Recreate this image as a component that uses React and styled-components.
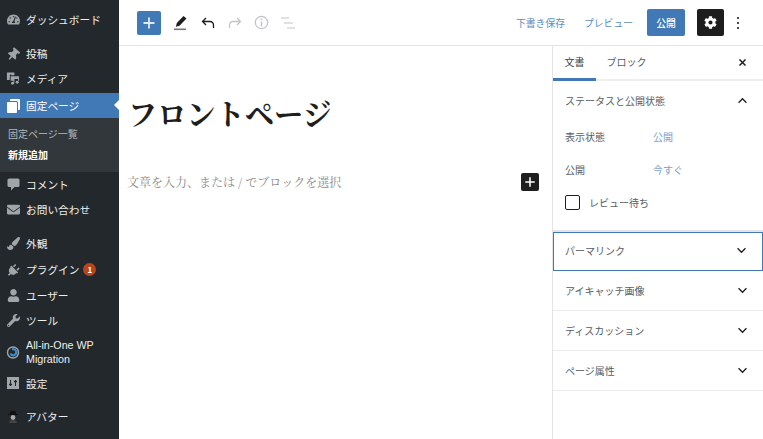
import React from "react";
import styled, { createGlobalStyle } from "styled-components";
import { FaThumbtack, FaEnvelope, FaPaintBrush, FaPlug, FaUser, FaWrench, FaCog, FaTachometerAlt } from "react-icons/fa";

const Global = createGlobalStyle`
  html, body { margin: 0; padding: 0; height: 100%; overflow: hidden; background: #fff; }
  * { box-sizing: border-box; }
  body { font-family: "Noto Sans CJK JP", "Liberation Sans", sans-serif; }
`;

const Page = styled.div`
  display: flex;
  width: 763px;
  height: 439px;
  overflow: hidden;
`;
const Side = styled.nav`
  width: 119px;
  flex: none;
  background: #23282d;
  color: #eee;
  font-size: 10.7px;
  padding-top: 7px;
  overflow: hidden;
`;
const Item = styled.div`
  position: relative;
  display: flex;
  align-items: center;
  height: ${p => p.$h || 25}px;
  margin-bottom: ${p => p.$mb || 0}px;
  padding-left: 6px;
  background: ${p => (p.$active ? "#4079b6" : "transparent")};
  color: ${p => (p.$active ? "#fff" : "#eee")};
  line-height: 13px;
  ${p => p.$active && `
    &::after {
      content: "";
      position: absolute;
      right: 0;
      top: 7px;
      border: 5.5px solid transparent;
      border-right-color: #fff;
      border-left-width: 0;
    }
  `}
`;
const LatinLabel = styled.span`
  font-family: "Liberation Sans", sans-serif;
  margin-top: -1px;
`;
const IconSlot = styled.span`
  width: 14px;
  height: 14px;
  margin-right: 6px;
  display: flex;
  align-items: center;
  justify-content: center;
  flex: none;
  color: ${p => (p.$active ? "#fff" : "#a0a5aa")};
  font-size: 13px;
  transform: rotate(${p => p.$rot || 0}deg);
`;
const Badge = styled.span`
  display: inline-flex;
  align-items: center;
  justify-content: center;
  width: 13px;
  height: 13px;
  border-radius: 50%;
  background: #b5461f;
  color: #fff;
  font-size: 8px;
  font-weight: 700;
  margin-left: 4px;
`;
const Sub = styled.div`
  background: #32373c;
  height: 54px;
  padding: 8px 0 0 8px;
  font-size: 10px;
`;
const SubItem = styled.div`
  height: 21px;
  line-height: 16px;
  color: ${p => (p.$strong ? "#fff" : "#b4b9be")};
  font-weight: ${p => (p.$strong ? 700 : 400)};
`;
const Main = styled.div`
  flex: 1;
  display: flex;
  flex-direction: column;
  min-width: 0;
`;
const Top = styled.header`
  height: 46px;
  flex: none;
  display: flex;
  align-items: center;
  padding: 0 23px 0 18px;
  border-bottom: 1px solid #e2e4e7;
`;
const Tool = styled.span`
  display: flex;
  width: 21px;
  justify-content: center;
  margin-right: 6px;
  color: ${p => (p.$off ? "#c3c4c7" : "#1e1e1e")};
`;
const AddBtn = styled.button`
  width: 24px;
  height: 24px;
  border: 0;
  border-radius: 2px;
  background: #4079b6;
  color: #dfe9f3;
  padding: 0;
  margin-right: 9px;
  display: flex;
  align-items: center;
  justify-content: center;
`;
const Spacer = styled.div`
  flex: 1;
`;
const LinkBtn = styled.span`
  color: #4079b6;
  opacity: .85;
  font-size: 9.8px;
  margin-right: ${p => p.$mr}px;
`;
const Publish = styled.button`
  width: 38px;
  height: 27px;
  border: 0;
  border-radius: 2px;
  background: #4079b6;
  color: #fff;
  font: 500 9.8px "Noto Sans CJK JP", sans-serif;
  padding: 0;
  margin-right: 12px;
`;
const GearBtn = styled.button`
  width: 27px;
  height: 27px;
  border: 0;
  border-radius: 2px;
  background: #1e1e1e;
  color: #fff;
  padding: 0;
  display: flex;
  align-items: center;
  justify-content: center;
  margin-right: 12px;
`;
const Body = styled.div`
  flex: 1;
  display: flex;
  min-height: 0;
`;
const Editor = styled.main`
  flex: 1;
  padding: 44px 13px 0 11px;
  min-width: 0;
`;
const Title = styled.h1`
  margin: 0 0 0 -2px;
  font: 700 29.2px/44px "Noto Serif CJK JP", "Liberation Serif", "Noto Sans CJK JP", serif;
  color: #1e1e1e;
  white-space: nowrap;
`;
const PlaceRow = styled.div`
  display: flex;
  align-items: center;
  justify-content: space-between;
  margin-top: 39px;
  margin-left: -3px;
  color: #8a8a8a;
  font: 12px/18px "Noto Serif CJK JP", "Liberation Serif", "Noto Sans CJK JP", serif;
`;
const InlineAdd = styled.span`
  width: 18px;
  height: 18px;
  border-radius: 2px;
  background: #1e1e1e;
  color: #fff;
  display: flex;
  align-items: center;
  justify-content: center;
`;
const Panel = styled.aside`
  width: 211px;
  flex: none;
  border-left: 1px solid #e2e4e7;
  font-size: 10px;
  color: #555d66;
`;
const Tabs = styled.div`
  height: 35px;
  display: flex;
  align-items: stretch;
  border-bottom: 2px solid #eeeeee;
  padding-right: 16px;
`;
const TabItem = styled.div`
  width: ${p => p.$w}px;
  display: flex;
  align-items: center;
  justify-content: center;
  padding-bottom: 2px;
  color: ${p => (p.$active ? "#3c434a" : "#555d66")};
  border-bottom: 3px solid ${p => (p.$active ? "#4079b6" : "transparent")};
  margin-bottom: -2px;
`;
const Section = styled.section`
  height: ${p => p.$h || 40}px;
  display: flex;
  align-items: center;
  justify-content: space-between;
  padding: 0 4px ${p => (p.$focus ? 2 : 0)}px ${p => (p.$focus ? 11 : 12)}px;
  border-bottom: 1px solid ${p => (p.$open ? "transparent" : "#e8eaeb")};
  ${p => p.$focus && `border: 1px solid #4079b6;`}
`;
const Status = styled.div`
  height: 112px;
  border-bottom: 2px solid #e2e4e7;
  padding: 0 12px;
`;
const Row = styled.div`
  display: flex;
  height: 33px;
  align-items: center;
`;
const Label = styled.span`
  width: 88px;
`;
const Val = styled.span`
  color: #4079b6;
  opacity: .7;
`;
const Check = styled.span`
  width: 15px;
  height: 15px;
  border: 1px solid #1e1e1e;
  border-radius: 2px;
  margin-right: 9px;
`;
const Close = styled.span`
  margin-left: auto;
  display: flex;
  align-items: center;
  color: #1e1e1e;
`;
const Chevron = styled.span`
  width: 24px;
  display: flex;
  justify-content: center;
  margin-right: 5px;
  color: #1e1e1e;
`;

const Plus = ({ s = 14, w = 2 }) => (
  <svg width={s} height={s} viewBox="0 0 14 14"><path d="M7 1.5v11M1.5 7h11" stroke="currentColor" strokeWidth={w} fill="none" /></svg>
);
const Chev = ({ up }) => (
  <svg width="11" height="7" viewBox="0 0 12 8"><path d={up ? "M1.5 6.5L6 2l4.5 4.5" : "M1.5 1.5L6 6l4.5-4.5"} stroke="currentColor" strokeWidth="1.5" fill="none" /></svg>
);
const Media = () => (
  <svg width="15" height="15" viewBox="0 0 15 15" fill="currentColor"><path d="M1 1h8v3H6.5A2.5 2.5 0 0 0 4 6.5V9H1z" /><circle cx="5" cy="4.2" r="1" fill="#23282d" /><path d="M5 5h9v5h-1V8H9v4H8V10H5z" /><circle cx="7" cy="12.5" r="1.6" /><circle cx="12" cy="11.5" r="1.6" /></svg>
);
const Pages = () => (
  <svg width="13" height="14" viewBox="0 0 13 14" fill="currentColor"><path d="M4 0h8a1 1 0 0 1 1 1v9a1 1 0 0 1-1 1h-1V3.5A1.5 1.5 0 0 0 9.5 2H3V1a1 1 0 0 1 1-1z" /><path d="M1 3h8a1 1 0 0 1 1 1v9a1 1 0 0 1-1 1H1a1 1 0 0 1-1-1V4a1 1 0 0 1 1-1z" /></svg>
);
const Bubble = () => (
  <svg width="13" height="13" viewBox="0 0 13 13" fill="currentColor"><path d="M2 .5h9a1.5 1.5 0 0 1 1.5 1.5v5.5A1.5 1.5 0 0 1 11 9H7.5L4 12.5V9H2A1.5 1.5 0 0 1 .5 7.5V2A1.5 1.5 0 0 1 2 .5z" /></svg>
);
const Migrate = () => (
  <svg width="14" height="14" viewBox="0 0 14 14" fill="none"><circle cx="7" cy="7.5" r="5.5" stroke="#a0a5aa" strokeWidth="1.4" /><path d="M4.5 8.5A3 3 0 1 0 6 4.5" stroke="#3f8fc9" strokeWidth="2" /></svg>
);
const Settings = () => (
  <svg width="12" height="12" viewBox="0 0 12 12"><rect width="12" height="12" fill="currentColor" /><path d="M3.5 3v6M8.5 3v6" stroke="#23282d" strokeWidth="1" /><path d="M2 7.5h3M7 4.5h3" stroke="#23282d" strokeWidth="1.6" /></svg>
);
const Avatar = () => (
  <svg width="12" height="14" viewBox="0 0 12 14"><path d="M3.5 1h5l.6 3H11v1H1V4h1.9z" fill="#111" /><circle cx="6" cy="7.5" r="2.4" fill="#aaa" /><path d="M2 13a4 3 0 0 1 8 0z" fill="#444" /></svg>
);

const nav = [
  { t: "ダッシュボード", i: <FaTachometerAlt />, h: 24, mb: 10 },
  { t: "投稿", i: <FaThumbtack />, rot: 40 },
  { t: "メディア", i: <Media />, mb: 2 },
];
const nav2 = [
  { t: "コメント", i: <Bubble /> },
  { t: "お問い合わせ", i: <FaEnvelope />, mb: 9 },
  { t: "外観", i: <FaPaintBrush />, h: 25.5 },
  { t: "プラグイン", i: <FaPlug />, badge: 1, rot: 45, h: 26 },
  { t: "ユーザー", i: <FaUser />, h: 25.5 },
  { t: "ツール", i: <FaWrench />, h: 25 },
  { t: <LatinLabel>All-in-One WP<br />Migration</LatinLabel>, i: <Migrate />, h: 37 },
];

function NavRow({ n }) {
  return (
    <Item $h={n.h} $mb={n.mb}>
      <IconSlot $rot={n.rot}>{n.i}</IconSlot>
      <span>{n.t}</span>
      {n.badge && <Badge>{n.badge}</Badge>}
    </Item>
  );
}

export default function App() {
  return (
    <Page>
      <Global />
      <Side>
        {nav.map((n, k) => <NavRow key={k} n={n} />)}
        <Item $h={25} $active>
          <IconSlot $active><Pages /></IconSlot>
          <span>固定ページ</span>
        </Item>
        <Sub>
          <SubItem>固定ページ一覧</SubItem>
          <SubItem $strong>新規追加</SubItem>
        </Sub>
        {nav2.map((n, k) => <NavRow key={k} n={n} />)}
        <Item $h={26} $mb={8}>
          <IconSlot><Settings /></IconSlot>
          <span>設定</span>
        </Item>
        <Item $h={25}>
          <IconSlot><Avatar /></IconSlot>
          <span>アバター</span>
        </Item>
      </Side>
      <Main>
        <Top>
          <AddBtn aria-label="追加"><Plus s={14} w={1.8} /></AddBtn>
          <Tool>
            <svg width="15" height="16" viewBox="0 0 15 16"><path d="M10.5 1l3 2.5-7 7.2-3.6 1 .9-3.6z" fill="currentColor" /><rect x="1" y="13.5" width="12" height="1.6" fill="#777" /></svg>
          </Tool>
          <Tool>
            <svg width="14" height="12" viewBox="0 0 14 12"><path d="M5 1L1.5 4.5 5 8M1.5 4.5H9a3.5 3.5 0 0 1 3.5 3.5v3" stroke="currentColor" strokeWidth="1.3" fill="none" /></svg>
          </Tool>
          <Tool $off>
            <svg width="14" height="12" viewBox="0 0 14 12"><path d="M9 1l3.5 3.5L9 8M12.5 4.5H5A3.5 3.5 0 0 0 1.5 8v3" stroke="currentColor" strokeWidth="1.3" fill="none" /></svg>
          </Tool>
          <Tool $off>
            <svg width="15" height="15" viewBox="0 0 15 15"><circle cx="7.5" cy="7.5" r="6.2" stroke="currentColor" strokeWidth="1.3" fill="none" /><path d="M7.5 6.5v5M7.5 3.6v1.6" stroke="currentColor" strokeWidth="1.5" /></svg>
          </Tool>
          <Tool $off>
            <svg width="15" height="12" viewBox="0 0 15 12"><path d="M0 1h8M3 6h9M6 11h8" stroke="currentColor" strokeWidth="1.2" /></svg>
          </Tool>
          <Spacer />
          <LinkBtn $mr={19}>下書き保存</LinkBtn>
          <LinkBtn $mr={14}>プレビュー</LinkBtn>
          <Publish>公開</Publish>
          <GearBtn aria-label="設定"><FaCog size={13} /></GearBtn>
          <svg width="4" height="14" viewBox="0 0 4 14"><circle cx="2" cy="2" r="1.1" fill="#1e1e1e" /><circle cx="2" cy="7" r="1.1" fill="#1e1e1e" /><circle cx="2" cy="12" r="1.1" fill="#1e1e1e" /></svg>
        </Top>
        <Body>
          <Editor>
            <Title>フロントページ</Title>
            <PlaceRow>
              <span>文章を入力、または / でブロックを選択</span>
              <InlineAdd><Plus s={12} w={1.8} /></InlineAdd>
            </PlaceRow>
          </Editor>
          <Panel>
            <Tabs>
              <TabItem $w={43} $active>文書</TabItem>
              <TabItem $w={61}>ブロック</TabItem>
              <Close>
                <svg width="9" height="9" viewBox="0 0 9 9"><path d="M1.5 1.5l6 6M7.5 1.5l-6 6" stroke="currentColor" strokeWidth="1.5" /></svg>
              </Close>
            </Tabs>
            <Section $h={39} $open><span>ステータスと公開状態</span><Chevron><Chev up /></Chevron></Section>
            <Status>
              <Row><Label>表示状態</Label><Val>公開</Val></Row>
              <Row><Label>公開</Label><Val>今すぐ</Val></Row>
              <Row><Check /><span>レビュー待ち</span></Row>
            </Status>
            <Section $focus $h={39}><span>パーマリンク</span><Chevron><Chev /></Chevron></Section>
            <Section><span>アイキャッチ画像</span><Chevron><Chev /></Chevron></Section>
            <Section><span>ディスカッション</span><Chevron><Chev /></Chevron></Section>
            <Section><span>ページ属性</span><Chevron><Chev /></Chevron></Section>
          </Panel>
        </Body>
      </Main>
    </Page>
  );
}
